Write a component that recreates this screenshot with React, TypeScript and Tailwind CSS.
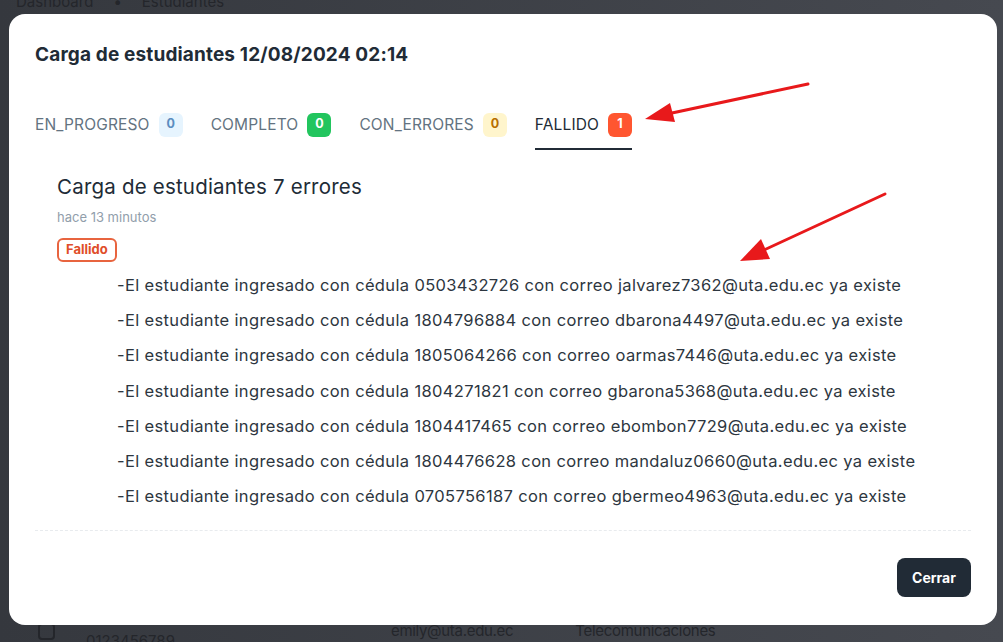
import React from 'react';

const errores = [
  { cedula: '0503432726', correo: 'jalvarez7362@uta.edu.ec' },
  { cedula: '1804796884', correo: 'dbarona4497@uta.edu.ec' },
  { cedula: '1805064266', correo: 'oarmas7446@uta.edu.ec' },
  { cedula: '1804271821', correo: 'gbarona5368@uta.edu.ec' },
  { cedula: '1804417465', correo: 'ebombon7729@uta.edu.ec' },
  { cedula: '1804476628', correo: 'mandaluz0660@uta.edu.ec' },
  { cedula: '0705756187', correo: 'gbermeo4963@uta.edu.ec' },
];

const tabs = [
  { label: 'EN_PROGRESO', count: 0, badge: 'bg-[#e6f4fe] text-[#5b8dc0]' },
  { label: 'COMPLETO', count: 0, badge: 'bg-[#22c55e] text-white' },
  { label: 'CON_ERRORES', count: 0, badge: 'bg-[#fff5cc] text-[#b76e00]' },
  { label: 'FALLIDO', count: 1, badge: 'bg-[#ff5630] text-white', active: true },
];

export default function App() {
  return (
    <div
      className="relative w-[1003px] h-[642px] overflow-hidden bg-gradient-to-r from-[#35383e] to-[#464950]"
      style={{ fontFamily: 'Inter, "Noto Sans", sans-serif' }}
    >
      {/* page behind the overlay */}
      <div className="flex items-center gap-5 pl-4 -mt-[9px] text-[15px] text-[#24262b]">
        <span>Dashboard</span>
        <span>•</span>
        <span>Estudiantes</span>
      </div>
      <div className="absolute left-0 top-[618px] flex items-start text-[15px] text-[#24262b]">
        <div className="ml-[38px] mt-[5px] w-[17px] h-[17px] rounded-[4px] border-2 border-[#24262b]" />
        <span className="ml-[31px] mt-[12px]">0123456789</span>
        <span className="ml-[216px] mt-[2px] tracking-[-0.3px]">emily@uta.edu.ec</span>
        <span className="ml-[62px] mt-[2px] tracking-[-0.3px]">Telecomunicaciones</span>
      </div>

      {/* modal */}
      <div className="absolute left-[9px] top-[14px] w-[988px] h-[611px] bg-white rounded-[16px] px-[26px] pt-[27px] flex flex-col">
        <h2 className="text-[19px] tracking-[0.15px] leading-[28px] font-bold text-[#212b36]">
          Carga de estudiantes 12/08/2024 02:14
        </h2>

        <div className="mt-8 flex gap-[28px] h-[49px]">
          {tabs.map(t => (
            <div
              key={t.label}
              className={`flex items-center gap-[9px] h-full border-b-2 ${t.active ? 'border-[#212b36] text-[#212b36]' : 'border-transparent text-[#637381]'}`}
            >
              <span className="text-[15.5px] tracking-[0.15px]">{t.label}</span>
              <span className={`w-[24px] h-[24px] rounded-[6px] flex items-center justify-center text-[12.5px] font-bold ${t.badge}`}>
                {t.count}
              </span>
            </div>
          ))}
        </div>

        <div className="pl-[22px] mt-[23px]">
          <h3 className="text-[20.5px] tracking-[0.2px] leading-[28px] text-[#212b36]">Carga de estudiantes 7 errores</h3>
          <p className="mt-2 text-[13px] leading-[16px] text-[#919eab]">hace 13 minutos</p>
          <span className="mt-[13px] inline-flex items-center h-[24px] px-[7px] rounded-[6px] border-2 border-[#e8643f] text-[#e04e2a] text-[13px] font-bold">
            Fallido
          </span>
          <ul className="mt-[6px] pl-[60px]">
            {errores.map(e => (
              <li key={e.cedula} className="text-[16.5px] tracking-[0.35px] leading-[35.2px] text-[#2d3640]">
                -El estudiante ingresado con cédula {e.cedula} con correo {e.correo} ya existe
              </li>
            ))}
          </ul>
        </div>

        <div className="mt-[16px] border-t border-dashed border-[#e8ebee]" />

        <div className="flex justify-end mt-[27px]">
          <button className="w-[74px] h-[39px] rounded-[8px] bg-[#212b36] text-white text-[14px] font-bold">
            Cerrar
          </button>
        </div>
      </div>

      {/* annotation arrows */}
      <svg className="absolute inset-0 pointer-events-none" width="1003" height="642">
        <line x1="808" y1="84" x2="672" y2="113" stroke="#e8191b" strokeWidth="3" strokeLinecap="round" />
        <polygon points="645,119 675,122 670,103" fill="#e8191b" />
        <line x1="885" y1="194" x2="764" y2="250" stroke="#e8191b" strokeWidth="3" strokeLinecap="round" />
        <polygon points="740,261 770,259 761,239" fill="#e8191b" />
      </svg>
    </div>
  );
}
